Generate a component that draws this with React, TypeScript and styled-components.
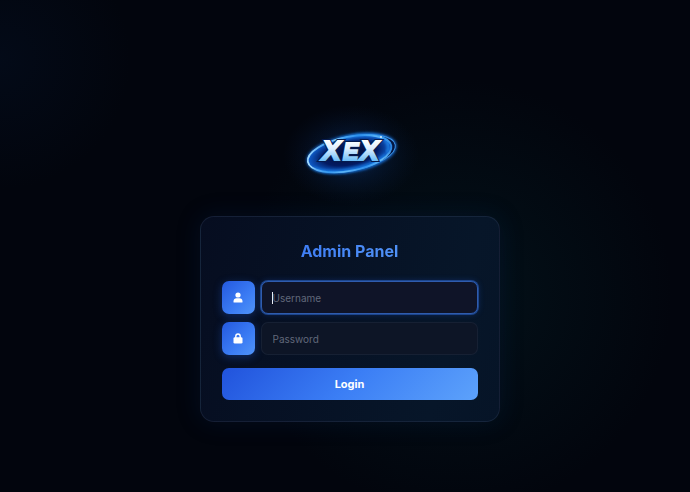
import React from 'react';
import styled, { createGlobalStyle } from 'styled-components';

const GlobalStyle = createGlobalStyle`
  *, *::before, *::after { box-sizing: border-box; }
  body {
    margin: 0;
    background: #02050d;
    font-family: Inter, "Liberation Sans", sans-serif;
  }
`;

const Page = styled.main`
  min-height: 100vh;
  display: flex;
  flex-direction: column;
  align-items: center;
  justify-content: center;
  gap: 23px;
  padding: 43px 0 0 9px;
  background:
    radial-gradient(circle at 0% 12%, rgba(5, 18, 40, 0.4), transparent 16%),
    radial-gradient(circle at 66% 60%, rgba(4, 32, 40, 0.45), transparent 40%),
    #02050d;
`;

const Logo = styled.svg`
  width: 120px;
  height: 80px;
  overflow: visible;
`;

const LogoText = styled.text`
  font-family: "Liberation Sans", Arial, sans-serif;
  font-size: 28px;
  font-weight: 700;
  font-style: italic;
`;

const SmallLetter = styled.tspan`
  font-size: 23px;
`;

const Card = styled.form`
  width: 300px;
  max-width: 100%;
  display: flex;
  flex-direction: column;
  gap: 8px;
  padding: 21px;
  border: 1px solid rgba(110, 135, 180, 0.14);
  border-radius: 14px;
  background: linear-gradient(105deg, #060d20, #071629 80%, #061427);
  box-shadow: 0 0 24px rgba(14, 44, 100, 0.22);
`;

const Title = styled.h1`
  margin: 0 0 11px;
  padding-top: 2px;
  font-size: 16px;
  line-height: 22px;
  font-weight: 700;
  text-align: center;
  background: linear-gradient(135deg, #2f6af0, #60a5fa);
  background-clip: text;
  color: transparent;
`;

const Field = styled.div`
  display: flex;
  gap: 6px;
`;

const IconLabel = styled.label`
  width: 33px;
  height: 33px;
  flex: none;
  display: flex;
  align-items: center;
  justify-content: center;
  border-radius: 7px;
  background: linear-gradient(135deg, #2459de, #3b7cf4 60%, #5094f8);
  box-shadow: 0 2px 9px rgba(37, 99, 235, 0.34);
`;

const InputWrap = styled.div<{ $caret?: boolean }>`
  position: relative;
  flex: 1;
  display: flex;

  &::before {
    content: "";
    display: ${(p) => (p.$caret ? 'block' : 'none')};
    position: absolute;
    left: 11px;
    top: 11px;
    width: 1px;
    height: 12px;
    background: #e8edf6;
  }
`;

const Input = styled.input<{ $active?: boolean }>`
  width: 100%;
  min-width: 0;
  height: 33px;
  padding: 1px 11px 0;
  border: 1px solid ${(p) => (p.$active ? '#2f5cae' : 'rgba(120, 145, 190, 0.09)')};
  border-radius: 7px;
  outline: none;
  background: ${(p) => (p.$active ? '#0f1428' : '#0d1526')};
  box-shadow: ${(p) => (p.$active ? '0 0 0 1px #1c458c, 0 0 6px rgba(37, 99, 235, 0.3)' : 'none')};
  color: #e8edf6;
  caret-color: transparent;
  font: 400 10px/14px Inter, "Liberation Sans", sans-serif;

  &::placeholder {
    color: #61687a;
    opacity: 1;
  }
`;

const LoginButton = styled.button`
  height: 32px;
  margin-top: 5px;
  padding: 0;
  border: 0;
  border-radius: 7px;
  background: linear-gradient(135deg, #2153dc, #3b7ef5 50%, #5da2fb);
  color: #fff;
  font: 700 11px/14px Inter, "Liberation Sans", sans-serif;
  cursor: pointer;
`;

function XexLetters(props: React.SVGProps<SVGTextElement>) {
  return (
    <LogoText y="47" strokeLinejoin="miter" {...props}>
      <tspan x="32">X</tspan>
      <SmallLetter x="53">E</SmallLetter>
      <tspan x="70">X</tspan>
    </LogoText>
  );
}

function XexLogo() {
  return (
    <Logo viewBox="0 0 120 80" role="img" aria-label="XEX">
      <defs>
        <radialGradient id="halo">
          <stop offset="0" stopColor="#1553b5" stopOpacity="0.5" />
          <stop offset="0.5" stopColor="#0d3577" stopOpacity="0.22" />
          <stop offset="1" stopColor="#0a2450" stopOpacity="0" />
        </radialGradient>
        <radialGradient id="disc">
          <stop offset="0" stopColor="#020b32" />
          <stop offset="0.65" stopColor="#031b62" />
          <stop offset="1" stopColor="#0f60d0" />
        </radialGradient>
        <linearGradient id="rim" x1="0" y1="0" x2="1" y2="0">
          <stop offset="0" stopColor="#a4dcff" />
          <stop offset="0.22" stopColor="#4aa2f2" />
          <stop offset="0.4" stopColor="#86cffc" />
          <stop offset="0.65" stopColor="#3b94ec" />
          <stop offset="0.85" stopColor="#86d2fc" />
          <stop offset="1" stopColor="#2c86e0" />
        </linearGradient>
        <linearGradient id="letters" gradientUnits="userSpaceOnUse" x1="0" y1="27" x2="0" y2="49">
          <stop offset="0" stopColor="#ffffff" />
          <stop offset="0.4" stopColor="#dceeff" />
          <stop offset="1" stopColor="#62b9f7" />
        </linearGradient>
        <filter id="soft" x="-20%" y="-40%" width="140%" height="180%">
          <feGaussianBlur stdDeviation="1.5" />
        </filter>
      </defs>
      <ellipse cx="61" cy="42" rx="68" ry="50" fill="url(#halo)" />
      <g transform="rotate(-11 61 40)">
        <ellipse cx="61.500" cy="40.500" rx="44" ry="17" fill="none" stroke="#1776e8" strokeWidth="3" filter="url(#soft)" />
        <ellipse cx="61.500" cy="40.500" rx="44.500" ry="17" fill="#031540" stroke="#3e91e4" strokeWidth="1" />
        <ellipse cx="59.500" cy="40.500" rx="42.500" ry="17" fill="url(#disc)" stroke="url(#rim)" strokeWidth="1.800" />
        <path d="M52 24.500C72 22 91 26 98 33" fill="none" stroke="#1f8bf0" strokeWidth="2" filter="url(#soft)" />
        <path d="M22 48C35 58 78 60 95 48" fill="none" stroke="#1f8bf0" strokeWidth="2" filter="url(#soft)" />
        <path d="M97 34Q102 40 96 47" fill="none" stroke="#2591f2" strokeWidth="2" filter="url(#soft)" />
      </g>
      <XexLetters fill="#061a4d" stroke="#061a4d" strokeWidth="4" />
      <XexLetters fill="url(#letters)" stroke="url(#letters)" strokeWidth="2" aria-hidden="true" />
      <circle cx="91" cy="24" r="1" fill="#d7f2ff" />
    </Logo>
  );
}

function UserIcon() {
  return (
    <svg width="10" height="11" viewBox="0 0 10 11" fill="#fff" aria-hidden="true">
      <circle cx="5" cy="3" r="2.600" />
      <path d="M.5 10V9.200C.5 7.400 1.900 6.200 3.500 6.200h3c1.600 0 3 1.200 3 3V10q0 .5-.5.500H1Q.5 10.500.5 10Z" />
    </svg>
  );
}

function LockIcon() {
  return (
    <svg width="10" height="11" viewBox="0 0 10 11" aria-hidden="true">
      <path d="M2.800 5V3.200a2.200 2.200 0 0 1 4.400 0V5" fill="none" stroke="#fff" strokeWidth="1.400" />
      <rect x=".5" y="4.200" width="9" height="6.300" rx="1.300" fill="#fff" />
    </svg>
  );
}

export default function App() {
  return (
    <>
      <GlobalStyle />
      <Page>
        <XexLogo />
        <Card onSubmit={(e: React.FormEvent) => e.preventDefault()}>
          <Title>Admin Panel</Title>
          <Field>
            <IconLabel htmlFor="username" aria-label="Username">
              <UserIcon />
            </IconLabel>
            <InputWrap $caret>
              <Input id="username" type="text" placeholder="Username" $active />
            </InputWrap>
          </Field>
          <Field>
            <IconLabel htmlFor="password" aria-label="Password">
              <LockIcon />
            </IconLabel>
            <InputWrap>
              <Input id="password" type="password" placeholder="Password" />
            </InputWrap>
          </Field>
          <LoginButton type="submit">Login</LoginButton>
        </Card>
      </Page>
    </>
  );
}
